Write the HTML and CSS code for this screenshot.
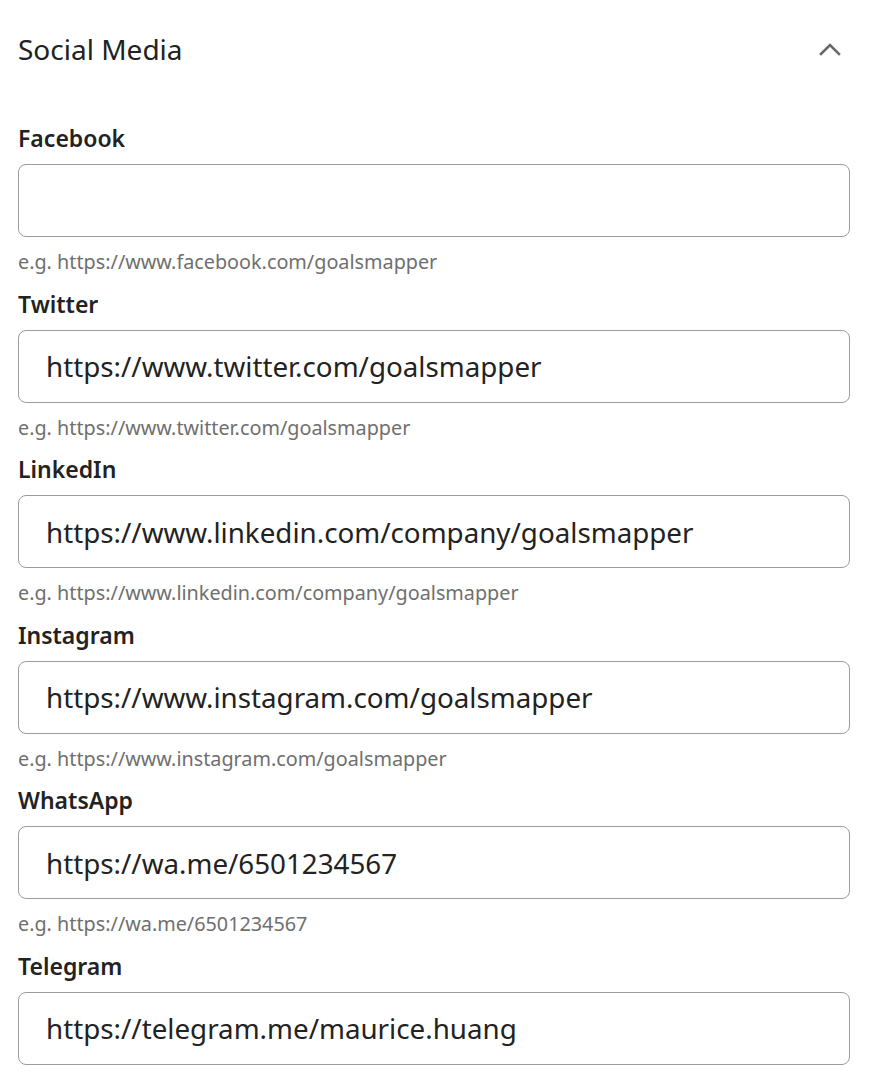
FILE: index.html
```html
<!DOCTYPE html>
<html lang="en">
<head>
    <meta charset="UTF-8">
    <meta name="viewport" content="width=device-width, initial-scale=1.0">
    <title>Social Media</title>
    <link rel="stylesheet" href="styles.css">
</head>
<body>
    <section class="panel">
        <div class="panel-header">
            <h2>Social Media</h2>
            <button class="toggle" type="button" aria-label="Collapse">
                <svg width="22" height="13" viewBox="0 0 22 13">
                    <path d="M2 11 L11 2 L20 11" fill="none" stroke="#666" stroke-width="2.5" stroke-linecap="square"/>
                </svg>
            </button>
        </div>

        <form class="fields">
            <div class="field">
                <label for="facebook">Facebook</label>
                <input type="text" id="facebook" value="">
                <p class="hint">e.g. https://www.facebook.com/goalsmapper</p>
            </div>
            <div class="field">
                <label for="twitter">Twitter</label>
                <input type="text" id="twitter" value="https://www.twitter.com/goalsmapper">
                <p class="hint">e.g. https://www.twitter.com/goalsmapper</p>
            </div>
            <div class="field">
                <label for="linkedin">LinkedIn</label>
                <input type="text" id="linkedin" value="https://www.linkedin.com/company/goalsmapper">
                <p class="hint">e.g. https://www.linkedin.com/company/goalsmapper</p>
            </div>
            <div class="field">
                <label for="instagram">Instagram</label>
                <input type="text" id="instagram" value="https://www.instagram.com/goalsmapper">
                <p class="hint">e.g. https://www.instagram.com/goalsmapper</p>
            </div>
            <div class="field">
                <label for="whatsapp">WhatsApp</label>
                <input type="text" id="whatsapp" value="https://wa.me/6501234567">
                <p class="hint">e.g. https://wa.me/6501234567</p>
            </div>
            <div class="field">
                <label for="telegram">Telegram</label>
                <input type="text" id="telegram" value="https://telegram.me/maurice.huang">
                <p class="hint">e.g. https://telegram.me/maurice.huang</p>
            </div>
        </form>
    </section>
</body>
</html>
```

FILE: styles.css
```css
body {
    margin: 0;
    font-family: "Noto Sans", "Open Sans", Arial, sans-serif;
    background: #fff;
    color: #222;
}

.panel {
    padding: 0 20px 0 18px;
}

.panel-header {
    display: flex;
    justify-content: space-between;
    align-items: center;
    margin-top: 28px;
    height: 42px;
}

.panel-header h2 {
    margin: 0;
    font-size: 28px;
    font-weight: 400;
    line-height: 42px;
    color: #222;
}

.toggle {
    background: none;
    border: none;
    padding: 0;
    margin-right: 9px;
    display: flex;
    cursor: pointer;
}

.fields {
    margin-top: 53px;
    display: flex;
    flex-direction: column;
    gap: 12.6px;
}

.field {
    display: flex;
    flex-direction: column;
}

.field label {
    font-size: 23px;
    font-weight: 600;
    line-height: 30px;
    color: #222;
    margin-bottom: 11px;
}

.field input {
    height: 73px;
    box-sizing: border-box;
    width: 100%;
    border: 1px solid #9c9c9c;
    border-radius: 8px;
    padding: 0 27px;
    font-family: inherit;
    font-size: 27.75px;
    color: #222;
    outline: none;
}

.hint {
    margin: 11px 0 0;
    font-size: 19.8px;
    line-height: 28px;
    color: #6f6f6f;
}
```
